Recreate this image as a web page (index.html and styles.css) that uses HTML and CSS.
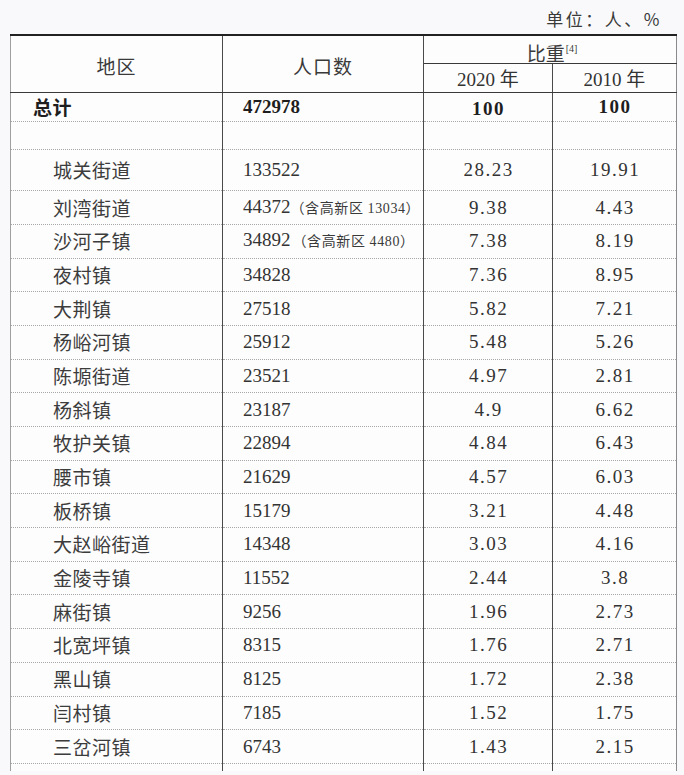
FILE: index.html
```html
<!DOCTYPE html>
<html lang="zh">
<head>
<meta charset="utf-8">
<title>人口数</title>
<link rel="stylesheet" href="styles.css">
</head>
<body>
<div class="sheet">
  <div class="unit">单位：人、%</div>
  <table class="data">
    <colgroup>
      <col class="c1"><col class="c2"><col class="c3"><col class="c4">
    </colgroup>
    <thead>
      <tr class="h1">
        <th rowspan="2" class="hname">地区</th>
        <th rowspan="2" class="hname">人口数</th>
        <th colspan="2" class="hratio">比重<sup>[4]</sup></th>
      </tr>
      <tr class="h2">
        <th class="hyear">2020 年</th>
        <th class="hyear">2010 年</th>
      </tr>
    </thead>
    <tbody>
      <tr class="total">
        <td class="name">总计</td>
        <td class="num">472978</td>
        <td class="pct">100</td>
        <td class="pct up">100</td>
      </tr>
      <tr class="blank"><td></td><td></td><td></td><td></td></tr>
      <tr class="first">
        <td class="name">城关街道</td><td class="num">133522</td><td class="pct">28.23</td><td class="pct">19.91</td>
      </tr>
      <tr><td class="name">刘湾街道</td><td class="num">44372<span class="note">（含高新区 13034）</span></td><td class="pct">9.38</td><td class="pct">4.43</td></tr>
      <tr><td class="name">沙河子镇</td><td class="num">34892<span class="note wide">（含高新区 4480）</span></td><td class="pct">7.38</td><td class="pct">8.19</td></tr>
      <tr><td class="name">夜村镇</td><td class="num">34828</td><td class="pct">7.36</td><td class="pct">8.95</td></tr>
      <tr><td class="name">大荆镇</td><td class="num">27518</td><td class="pct">5.82</td><td class="pct">7.21</td></tr>
      <tr><td class="name">杨峪河镇</td><td class="num">25912</td><td class="pct">5.48</td><td class="pct">5.26</td></tr>
      <tr><td class="name">陈塬街道</td><td class="num">23521</td><td class="pct">4.97</td><td class="pct">2.81</td></tr>
      <tr><td class="name">杨斜镇</td><td class="num">23187</td><td class="pct">4.9</td><td class="pct">6.62</td></tr>
      <tr><td class="name">牧护关镇</td><td class="num">22894</td><td class="pct">4.84</td><td class="pct">6.43</td></tr>
      <tr><td class="name">腰市镇</td><td class="num">21629</td><td class="pct">4.57</td><td class="pct">6.03</td></tr>
      <tr><td class="name">板桥镇</td><td class="num">15179</td><td class="pct">3.21</td><td class="pct">4.48</td></tr>
      <tr><td class="name">大赵峪街道</td><td class="num">14348</td><td class="pct">3.03</td><td class="pct">4.16</td></tr>
      <tr><td class="name">金陵寺镇</td><td class="num">11552</td><td class="pct">2.44</td><td class="pct">3.8</td></tr>
      <tr><td class="name">麻街镇</td><td class="num">9256</td><td class="pct">1.96</td><td class="pct">2.73</td></tr>
      <tr><td class="name">北宽坪镇</td><td class="num">8315</td><td class="pct">1.76</td><td class="pct">2.71</td></tr>
      <tr><td class="name">黑山镇</td><td class="num">8125</td><td class="pct">1.72</td><td class="pct">2.38</td></tr>
      <tr><td class="name">闫村镇</td><td class="num">7185</td><td class="pct">1.52</td><td class="pct">1.75</td></tr>
      <tr><td class="name">三岔河镇</td><td class="num">6743</td><td class="pct">1.43</td><td class="pct">2.15</td></tr>
      <tr class="tail"><td></td><td></td><td></td><td></td></tr>
    </tbody>
  </table>
</div>
</body>
</html>
```

FILE: styles.css
```css
html, body {
  margin: 0;
  padding: 0;
}
body {
  background: #f9f9fb;
  color: #333;
  font-family: "Liberation Serif", "Noto Sans CJK SC", serif;
  height: 775px;
  overflow: hidden;
}
.sheet {
  padding: 0 8px 0 10px;
}
.unit {
  height: 34px;
  box-sizing: border-box;
  padding: 9px 14px 0 0;
  text-align: right;
  font-family: "Noto Sans CJK SC", sans-serif;
  font-size: 17px;
  letter-spacing: 2.5px;
  line-height: 20px;
  color: #3a3a3a;
}
.data {
  width: 666px;
  border-collapse: collapse;
  table-layout: fixed;
  background: #fdfdfd;
  border-top: 2px solid #222;
}
.c1 { width: 212px; }
.c2 { width: 201px; }
.c3 { width: 129px; }
.c4 { width: 124px; }

.data th, .data td {
  padding: 0;
  border-left: 1.5px solid #4a4a4a;
  border-right: 1.5px solid #4a4a4a;
  border-bottom: 1px dotted #a8a8a8;
  font-weight: normal;
  font-size: 19px;
  line-height: 22px;
  white-space: nowrap;
}
.data tr > :first-child { border-left: 1px solid #a0a0a0; }
.data tr > :last-child { border-right: 1px solid #8a8a8a; }

.data thead th {
  border-bottom: 1.5px solid #3a3a3a;
}
.hname {
  font-family: "Noto Sans CJK SC", sans-serif;
  letter-spacing: 1px;
  text-align: center;
  vertical-align: middle;
  padding-top: 5px !important;
  color: #3a3a3a;
}
.h1 { height: 28px; }
.h2 { height: 29px; }
.hratio {
  font-family: "Noto Sans CJK SC", sans-serif;
  text-align: center;
  vertical-align: bottom;
  color: #3a3a3a;
  line-height: 20px !important;
  padding-left: 4px !important;
}
.hratio sup {
  font-family: "Liberation Serif", serif;
  font-size: 10px;
  vertical-align: 9px;
  line-height: 0;
  margin-left: 1px;
}
.hyear {
  text-align: center;
  vertical-align: bottom;
  padding-bottom: 1px !important;
  font-family: "Liberation Serif", "Noto Sans CJK SC", serif;
}

.name {
  font-family: "Noto Sans CJK SC", sans-serif;
  padding-left: 42px !important;
  letter-spacing: 0.5px;
  color: #3c3c3c;
}
.num {
  padding-left: 20px !important;
}
.pct {
  text-align: center;
  letter-spacing: 1.5px;
  padding-left: 1px !important;
}
.note {
  font-family: "Liberation Serif", "Noto Sans CJK SC", serif;
  font-size: 14px;
  letter-spacing: 0.6px;
  color: #3a3a3a;
}
.note.wide { margin-left: 2px; }

.total { height: 29px; }
.total td {
  font-weight: bold;
  color: #1e1e1e;
}
.total .name {
  padding-left: 22px !important;
  padding-top: 1px !important;
}
.total .pct { padding-top: 4px !important; }
.total .pct.up { padding-top: 0 !important; }
.blank { height: 28px; }
.first { height: 41.7px; }
.data tbody tr { height: 33.7px; }
.data tbody tr.total { height: 29px; }
.data tbody tr.blank { height: 28px; }
.data tbody tr.first { height: 41.7px; }
.data tbody tr.tail { height: 8px; }
.data tbody tr.tail td { border-bottom: none; }
```
